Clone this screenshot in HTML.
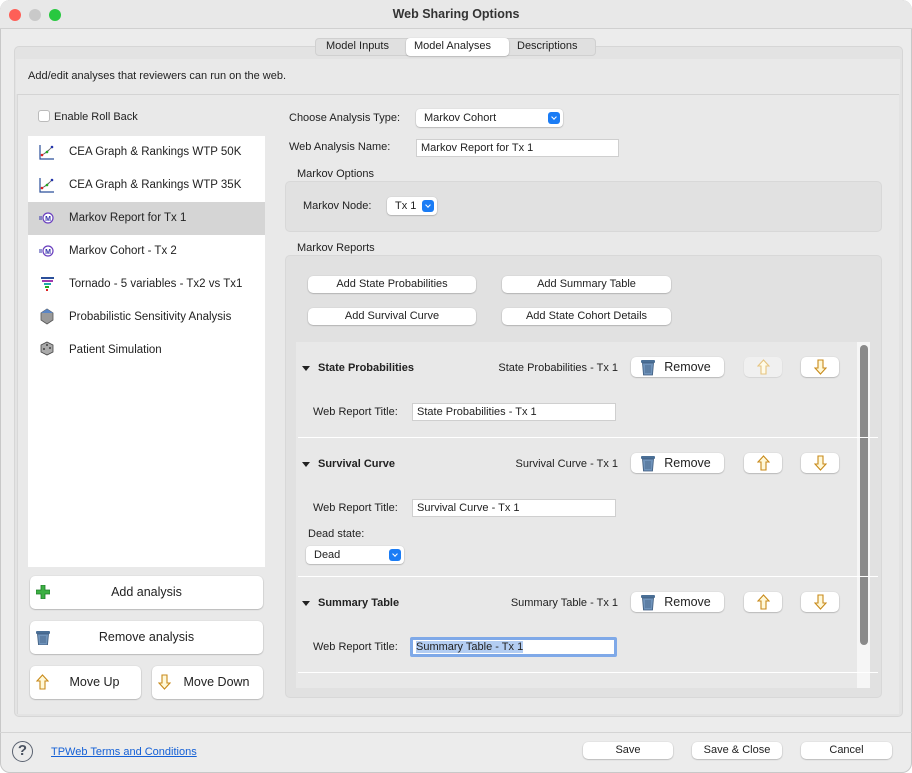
<!DOCTYPE html>
<html><head><meta charset="utf-8"><style>
*{box-sizing:border-box;margin:0;padding:0}
body{width:912px;height:773px;background:#fff;font-family:"Liberation Sans",sans-serif;font-size:11px;color:#222;position:relative;overflow:hidden}
.a{position:absolute}
.win{left:0;top:0;width:912px;height:773px;background:#ececec;border-radius:10px;box-shadow:inset 0 0 0 1px #c8c8c8;overflow:hidden}
.btn{position:absolute;background:#fff;border-radius:5px;box-shadow:0 0.5px 1.5px rgba(0,0,0,.35);text-align:center;color:#222}
.inp{position:absolute;background:#fff;border:1px solid #cfcfcf;padding-left:4px;line-height:16px;font-size:11px}
.sel{position:absolute;background:#fff;border-radius:4px;box-shadow:0 0.5px 1.5px rgba(0,0,0,.35);padding-left:8px;line-height:18px}
.sel i{position:absolute;right:3px;top:3px;width:12px;height:12px;background:#1a7cf5;border-radius:3px}
.sel i:after{content:"";position:absolute;left:4px;top:3px;width:3px;height:3px;border-right:1.2px solid #fff;border-bottom:1.2px solid #fff;transform:rotate(45deg)}
.li{position:absolute;left:28px;width:237px;height:33px;font-size:11.5px;line-height:33px;padding-left:41px;color:#222}
.tri{position:absolute;width:0;height:0;border-left:4px solid transparent;border-right:4px solid transparent;border-top:5px solid #222}
.hd{position:absolute;font-weight:bold;font-size:11px}
.sep{position:absolute;left:298px;width:580px;height:1px;background:#fff}
</style></head><body>
<div class="a win">
<div class="a" style="left:0;top:0;width:912px;height:29px;background:#e8e8e8;border-bottom:1px solid #d0d0d0;border-radius:10px 10px 0 0"></div>
<div class="a" style="left:9px;top:9px;width:12px;height:12px;border-radius:6px;background:#fe5f57"></div>
<div class="a" style="left:29px;top:9px;width:12px;height:12px;border-radius:6px;background:#c9c9c9"></div>
<div class="a" style="left:49px;top:9px;width:12px;height:12px;border-radius:6px;background:#28c840"></div>
<div class="a" style="left:0;top:7px;width:912px;text-align:center;font-weight:bold;font-size:12.5px;color:#333">Web Sharing Options</div>

<div class="a" style="left:14px;top:46px;width:889px;height:671px;background:#e3e3e3;border:1px solid #d6d6d6;border-radius:5px"></div>
<div class="a" style="left:16px;top:59px;width:884px;height:35px;background:#e9e9e9"></div>
<div class="a" style="left:17px;top:94px;width:882px;height:620px;background:#e9e9e9;border-top:1px solid #d4d4d4;border-left:1px solid #d8d8d8"></div>
<div class="a" style="left:315px;top:38px;width:281px;height:18px;background:#e0e0e0;border:1px solid #d0d0d0;border-radius:4px"></div>
<div class="a" style="left:406px;top:38px;width:103px;height:18px;background:#fff;border-radius:4px;box-shadow:0 .5px 1.5px rgba(0,0,0,.3)"></div>
<div class="a" style="left:326px;top:40px;font-size:11px">Model Inputs</div>
<div class="a" style="left:414px;top:40px;font-size:11px">Model Analyses</div>
<div class="a" style="left:517px;top:40px;font-size:11px">Descriptions</div>
<div class="a" style="left:28px;top:70px;font-size:11px">Add/edit analyses that reviewers can run on the web.</div>

<div class="a" style="left:38px;top:110px;width:12px;height:12px;background:#fff;border:1px solid #bbb;border-radius:3px"></div>
<div class="a" style="left:54px;top:111px;font-size:11px">Enable Roll Back</div>
<div class="a" style="left:28px;top:136px;width:237px;height:431px;background:#fff"></div>
<div class="a" style="left:28px;top:202px;width:237px;height:33px;background:#d5d5d5"></div>
<svg class="a" style="left:38px;top:144px" width="18" height="82" viewBox="0 0 18 82">
<g fill="none" stroke="#2b4f9a" stroke-width="1.2"><path d="M2 1V15H16"/><path d="M2 34V48H16"/></g>
<path d="M4 11L9 8L14 3M4 44L9 41L14 36" stroke="#666" stroke-width=".8"/>
<circle cx="4" cy="11" r="1.3" fill="#d22"/><circle cx="9" cy="8" r="1.3" fill="#2a2"/><circle cx="14" cy="3" r="1.3" fill="#23a"/>
<circle cx="4" cy="44" r="1.3" fill="#d22"/><circle cx="9" cy="41" r="1.3" fill="#2a2"/><circle cx="14" cy="36" r="1.3" fill="#23a"/>
<g><path d="M1 73h3M1 75h3" stroke="#33a"/><circle cx="10" cy="74" r="5" fill="#fff" stroke="#6a3fbf" stroke-width="1.2"/><text x="10" y="77" font-size="7" font-weight="bold" fill="#33a" text-anchor="middle" font-family="Liberation Sans">M</text></g>
</svg>
<svg class="a" style="left:38px;top:243px" width="18" height="115" viewBox="0 0 18 115">
<path d="M1 7h3M1 9h3" stroke="#33a"/><circle cx="10" cy="8" r="5" fill="#fff" stroke="#6a3fbf" stroke-width="1.2"/><text x="10" y="11" font-size="7" font-weight="bold" fill="#33a" text-anchor="middle" font-family="Liberation Sans">M</text>
<rect x="3" y="34" width="13" height="2" fill="#2b4f9a"/><rect x="4" y="37" width="11" height="2" fill="#a03ab0"/><rect x="6" y="40" width="7" height="2" fill="#2aa"/><rect x="7" y="43" width="4" height="2" fill="#2a2"/><rect x="8" y="46" width="2" height="2" fill="#d22"/>
<path d="M9 66l6 4v7l-6 4-6-4v-7z" fill="#999" stroke="#555" stroke-width=".8"/><path d="M3 70l6-4 6 4" fill="#5b86c5"/>
<path d="M9 99l6 3v7l-6 3-6-3v-7z" fill="#aaa" stroke="#444" stroke-width=".8"/><circle cx="6" cy="106" r=".9" fill="#222"/><circle cx="12" cy="105" r=".9" fill="#222"/><circle cx="9" cy="102" r=".9" fill="#222"/>
</svg>
<div class="li" style="top:136px">CEA Graph &amp; Rankings WTP 50K</div>
<div class="li" style="top:169px">CEA Graph &amp; Rankings WTP 35K</div>
<div class="li" style="top:202px">Markov Report for Tx 1</div>
<div class="li" style="top:235px">Markov Cohort - Tx 2</div>
<div class="li" style="top:268px">Tornado - 5 variables - Tx2 vs Tx1</div>
<div class="li" style="top:301px">Probabilistic Sensitivity Analysis</div>
<div class="li" style="top:334px">Patient Simulation</div>

<div class="btn" style="left:30px;top:576px;width:233px;height:33px;line-height:33px;font-size:12.5px">Add analysis</div>
<svg class="a" style="left:36px;top:585px" width="14" height="14"><path d="M5 0h4v5h5v4H9v5H5V9H0V5h5z" fill="#3cb043" stroke="#1f7a2a" stroke-width=".8"/></svg>
<div class="btn" style="left:30px;top:621px;width:233px;height:33px;line-height:33px;font-size:12.5px">Remove analysis</div>
<svg class="a" style="left:36px;top:630px" width="14" height="15"><rect x="0" y="1" width="14" height="3" rx="1" fill="#4a6f96"/><path d="M1.5 4h11l-1 11h-9z" fill="#6f93bb" stroke="#3c5a7c" stroke-width=".8"/><path d="M5 6v7M7 6v7M9 6v7" stroke="#3c5a7c" stroke-width=".7"/></svg>
<div class="btn" style="left:30px;top:666px;width:111px;height:33px;line-height:33px;font-size:12.5px;padding-left:18px">Move Up</div>
<svg class="a" style="left:36px;top:674px" width="13" height="16"><path d="M6.5 1L12 7H9v8H4V7H1z" fill="#fff8d8" stroke="#c88a1a" stroke-width="1.1"/></svg>
<div class="btn" style="left:152px;top:666px;width:111px;height:33px;line-height:33px;font-size:12.5px;padding-left:18px">Move Down</div>
<svg class="a" style="left:158px;top:674px" width="13" height="16"><path d="M6.5 15L12 9H9V1H4v8H1z" fill="#fff8d8" stroke="#c88a1a" stroke-width="1.1"/></svg>

<div class="a" style="left:289px;top:112px">Choose Analysis Type:</div>
<div class="sel" style="left:416px;top:109px;width:147px">Markov Cohort<i></i></div>
<div class="a" style="left:289px;top:141px">Web Analysis Name:</div>
<div class="inp" style="left:416px;top:139px;width:203px;height:18px">Markov Report for Tx 1</div>
<div class="a" style="left:297px;top:168px">Markov Options</div>
<div class="a" style="left:285px;top:181px;width:597px;height:51px;background:#e1e1e1;border:1px solid #d8d8d8;border-radius:5px"></div>
<div class="a" style="left:303px;top:200px">Markov Node:</div>
<div class="sel" style="left:387px;top:197px;width:50px">Tx 1<i></i></div>
<div class="a" style="left:297px;top:242px">Markov Reports</div>
<div class="a" style="left:285px;top:255px;width:597px;height:443px;background:#e1e1e1;border:1px solid #d8d8d8;border-radius:5px"></div>
<div class="btn" style="left:308px;top:276px;width:168px;height:17px;line-height:17px">Add State Probabilities</div>
<div class="btn" style="left:502px;top:276px;width:169px;height:17px;line-height:17px">Add Summary Table</div>
<div class="btn" style="left:308px;top:308px;width:168px;height:17px;line-height:17px">Add Survival Curve</div>
<div class="btn" style="left:502px;top:308px;width:169px;height:17px;line-height:17px">Add State Cohort Details</div>
<div class="a" style="left:296px;top:342px;width:574px;height:346px;background:#e8e8e8"></div>
<div class="a" style="left:857px;top:342px;width:13px;height:346px;background:#f6f6f6"></div>
<div class="a" style="left:860px;top:345px;width:8px;height:300px;background:#8a8a8a;border-radius:4px"></div>

<div class="tri" style="left:302px;top:366px"></div>
<div class="hd" style="left:318px;top:362px">State Probabilities</div>
<div class="a" style="left:460px;top:362px;width:158px;text-align:right">State Probabilities - Tx 1</div>
<div class="tri" style="left:302px;top:462px"></div>
<div class="hd" style="left:318px;top:458px">Survival Curve</div>
<div class="a" style="left:460px;top:458px;width:158px;text-align:right">Survival Curve - Tx 1</div>
<div class="tri" style="left:302px;top:601px"></div>
<div class="hd" style="left:318px;top:597px">Summary Table</div>
<div class="a" style="left:460px;top:597px;width:158px;text-align:right">Summary Table - Tx 1</div>

<div class="btn" style="left:631px;top:357px;width:93px;height:20px;line-height:20px;font-size:12.5px;padding-left:20px">Remove</div>
<div class="btn" style="left:631px;top:453px;width:93px;height:20px;line-height:20px;font-size:12.5px;padding-left:20px">Remove</div>
<div class="btn" style="left:631px;top:592px;width:93px;height:20px;line-height:20px;font-size:12.5px;padding-left:20px">Remove</div>
<svg class="a" style="left:641px;top:359px" width="14" height="256"><g id="t"><rect x="0" y="1" width="14" height="3" rx="1" fill="#4a6f96"/><path d="M1.5 4h11l-1 12h-9z" fill="#6f93bb" stroke="#3c5a7c" stroke-width=".8"/><path d="M5 6v8M7 6v8M9 6v8" stroke="#3c5a7c" stroke-width=".7"/></g><use href="#t" y="96"/><use href="#t" y="235"/></svg>

<div class="btn" style="left:744px;top:357px;width:38px;height:20px;background:#f0f0f0;box-shadow:0 .5px 1px rgba(0,0,0,.15)"></div>
<div class="btn" style="left:744px;top:453px;width:38px;height:20px"></div>
<div class="btn" style="left:744px;top:592px;width:38px;height:20px"></div>
<div class="btn" style="left:801px;top:357px;width:38px;height:20px"></div>
<div class="btn" style="left:801px;top:453px;width:38px;height:20px"></div>
<div class="btn" style="left:801px;top:592px;width:38px;height:20px"></div>
<svg class="a" style="left:757px;top:359px" width="13" height="256"><path d="M6.5 1L12 7H9v8H4V7H1z" fill="#fffbe8" stroke="#e6c480" stroke-width="1.1"/><path d="M6.5 97L12 103H9v8H4v-8H1z" fill="#fff8d8" stroke="#c88a1a" stroke-width="1.1"/><path d="M6.5 236L12 242H9v8H4v-8H1z" fill="#fff8d8" stroke="#c88a1a" stroke-width="1.1"/></svg>
<svg class="a" style="left:814px;top:359px" width="13" height="256"><path d="M6.5 15L12 9H9V1H4v8H1z" fill="#fff8d8" stroke="#c88a1a" stroke-width="1.1"/><path d="M6.5 111L12 105H9v-8H4v8H1z" fill="#fff8d8" stroke="#c88a1a" stroke-width="1.1"/><path d="M6.5 250L12 244H9v-8H4v8H1z" fill="#fff8d8" stroke="#c88a1a" stroke-width="1.1"/></svg>

<div class="a" style="left:313px;top:406px">Web Report Title:</div>
<div class="inp" style="left:412px;top:403px;width:204px;height:18px">State Probabilities - Tx 1</div>
<div class="sep" style="top:437px"></div>
<div class="a" style="left:313px;top:502px">Web Report Title:</div>
<div class="inp" style="left:412px;top:499px;width:204px;height:18px">Survival Curve - Tx 1</div>
<div class="a" style="left:308px;top:528px">Dead state:</div>
<div class="sel" style="left:306px;top:546px;width:98px">Dead<i></i></div>
<div class="sep" style="top:576px"></div>
<div class="a" style="left:313px;top:641px">Web Report Title:</div>
<div class="a" style="left:410px;top:637px;width:207px;height:20px;background:#fff;border:3px solid #7fa9e8;border-radius:2px;line-height:14px;padding-left:3px"><span style="background:#b3cdf2">Summary Table - Tx 1</span></div>
<div class="sep" style="top:672px"></div>

<div class="a" style="left:0;top:732px;width:912px;height:1px;background:#d4d4d4"></div>
<div class="a" style="left:12px;top:741px;width:21px;height:21px;border:1.5px solid #5a6270;border-radius:50%;text-align:center;font-size:15px;font-weight:bold;line-height:18px;color:#4a5260">?</div>
<div class="a" style="left:51px;top:746px;color:#1460d6;text-decoration:underline;font-size:11px">TPWeb Terms and Conditions</div>
<div class="btn" style="left:583px;top:742px;width:90px;height:17px;line-height:17px">Save</div>
<div class="btn" style="left:692px;top:742px;width:90px;height:17px;line-height:17px">Save &amp; Close</div>
<div class="btn" style="left:801px;top:742px;width:91px;height:17px;line-height:17px">Cancel</div>
</div>
</body></html>
